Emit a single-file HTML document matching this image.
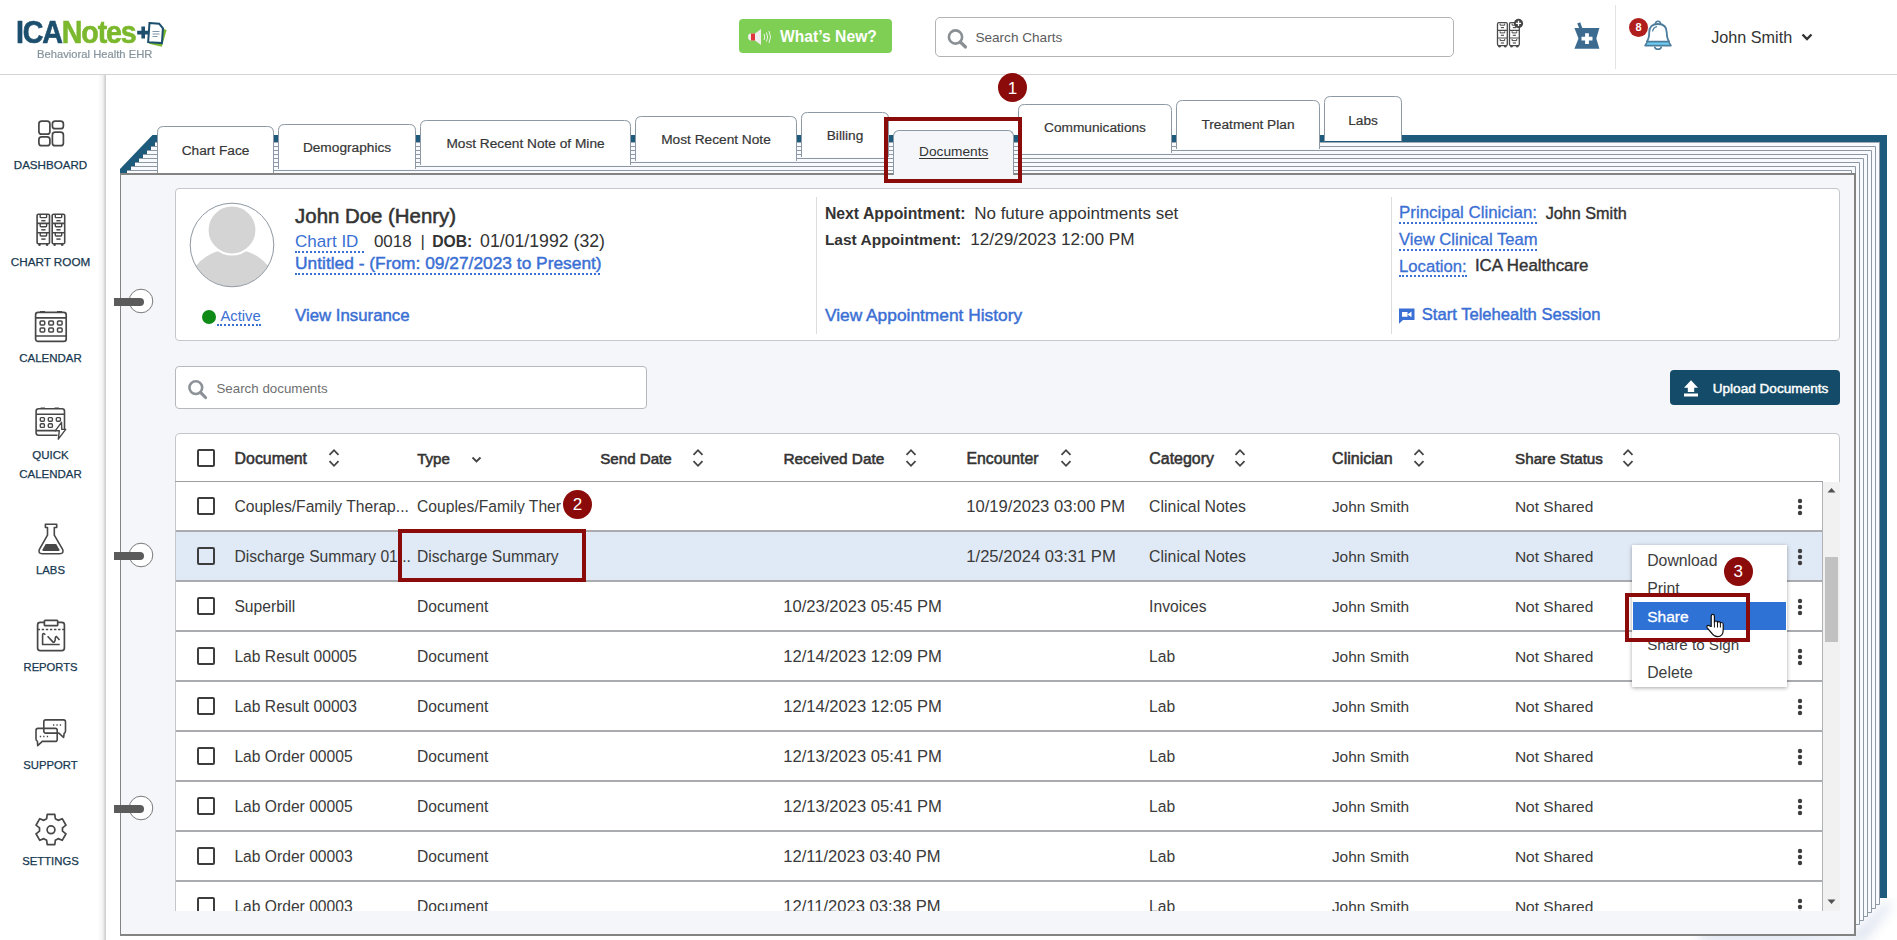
<!DOCTYPE html><html><head><meta charset="utf-8"><style>
*{margin:0;padding:0;box-sizing:border-box}
html,body{width:1897px;height:940px;overflow:hidden;background:#fff;font-family:'Liberation Sans', sans-serif;}
.t{position:absolute;white-space:nowrap;line-height:1}
.a{position:absolute}
.sb{-webkit-text-stroke:0.35px currentColor}
</style></head><body><div class="a" style="left:0;top:0;width:1897px;height:74px;background:#fff;border-bottom:1px solid #d4d4d4;height:75px"></div>
<div class="t" style="left:16px;top:16.84px;font-size:31.5px;font-weight:bold;letter-spacing:-1.3px;transform:scaleX(0.91);transform-origin:0 0;-webkit-text-stroke:0.6px currentColor"><span style="color:#1c4f6d">ICA</span><span style="color:#7bb82d">Notes</span></div>
<svg class="a" style="left:136px;top:20px" width="34" height="30" viewBox="0 0 34 30">
<path d="M19 5.5 L30.6 10 L25.8 26.7 L13 23.8 Z" fill="#7bb82d"/>
<path d="M12.8 3.4 H22.5 L26.6 7.8 V22.6 H12.8 Z" fill="#fff" stroke="#1c4f6d" stroke-width="2" transform="rotate(4 19 13)"/>
<path d="M1.2 12.6h12M7.2 6.6v12" stroke="#1c4f6d" stroke-width="3.6" fill="none"/>
<path d="M16.5 11.5h7M16.5 14h7M16.5 16.5h5" stroke="#7f96a8" stroke-width="1"/>
</svg>
<div class="t" style="left:36.5px;top:48.55px;font-size:11.4px;color:#85939b;transform:scaleX(0.985);transform-origin:0 0;-webkit-text-stroke:0.2px #85939b">Behavioral Health EHR</div>
<div class="a" style="left:739px;top:19px;width:153px;height:34px;background:#7fcf54;border-radius:4px"></div>
<svg class="a" style="left:746px;top:27px" width="26" height="20" viewBox="0 0 26 20">
<path d="M2 9.5 Q2 6.5 5 6.5 H9 L15 2 V18 L9 13.5 H5 Q2 13.5 2 9.5Z" fill="#eeeeee"/>
<rect x="5" y="6.5" width="4" height="7" fill="#e0353a"/>
<path d="M18 7 Q19.5 10 18 13M20.5 5.5 Q22.7 10 20.5 14.5M23 4 Q26 10 23 16" stroke="#eef5ea" stroke-width="1" fill="none"/>
</svg>
<div class="t " style="left:779.90px;top:28.99px;font-size:15.6px;font-weight:bold;color:#fff;letter-spacing:0.05px">What’s New?</div>
<div class="a" style="left:935px;top:17px;width:519px;height:40px;border:1px solid #b3b3b3;border-radius:5px;background:#fff"></div>
<svg class="a" style="left:946px;top:28px" width="24" height="22" viewBox="0 0 24 22">
<circle cx="9.5" cy="9" r="6.6" stroke="#8a8f94" stroke-width="2.6" fill="none"/>
<path d="M14.3 14 L19.5 19" stroke="#8a8f94" stroke-width="3.2" stroke-linecap="round"/>
</svg>
<div class="t " style="left:975.40px;top:30.69px;font-size:13.6px;color:#5c5c5c;">Search Charts</div>
<svg class="a" style="left:1490px;top:0" width="40" height="60" viewBox="0 0 40 60"><rect x="7.5" y="22.6" width="9.8" height="23" rx="1.3" stroke="#4a4a4a" stroke-width="1.3" fill="#fff"/><path d="M7.5 30.3 h9.8 M7.5 38 h9.8" stroke="#4a4a4a" stroke-width="1.2"/><path d="M10.1 23.6 v1.6 h4.6 v-1.6" stroke="#4a4a4a" stroke-width="1" fill="none"/><path d="M10.8 27.6 h3.2" stroke="#4a4a4a" stroke-width="1.1"/><path d="M10.1 31.3 v1.6 h4.6 v-1.6" stroke="#4a4a4a" stroke-width="1" fill="none"/><path d="M10.8 35.3 h3.2" stroke="#4a4a4a" stroke-width="1.1"/><path d="M10.1 39.0 v1.6 h4.6 v-1.6" stroke="#4a4a4a" stroke-width="1" fill="none"/><path d="M10.8 43.0 h3.2" stroke="#4a4a4a" stroke-width="1.1"/><circle cx="9.5" cy="46.3" r="1.3" fill="#4a4a4a"/><circle cx="15.3" cy="46.3" r="1.3" fill="#4a4a4a"/><rect x="19.5" y="22.6" width="9.8" height="23" rx="1.3" stroke="#4a4a4a" stroke-width="1.3" fill="#fff"/><path d="M19.5 30.3 h9.8 M19.5 38 h9.8" stroke="#4a4a4a" stroke-width="1.2"/><path d="M22.1 23.6 v1.6 h4.6 v-1.6" stroke="#4a4a4a" stroke-width="1" fill="none"/><path d="M22.8 27.6 h3.2" stroke="#4a4a4a" stroke-width="1.1"/><path d="M22.1 31.3 v1.6 h4.6 v-1.6" stroke="#4a4a4a" stroke-width="1" fill="none"/><path d="M22.8 35.3 h3.2" stroke="#4a4a4a" stroke-width="1.1"/><path d="M22.1 39.0 v1.6 h4.6 v-1.6" stroke="#4a4a4a" stroke-width="1" fill="none"/><path d="M22.8 43.0 h3.2" stroke="#4a4a4a" stroke-width="1.1"/><circle cx="21.5" cy="46.3" r="1.3" fill="#4a4a4a"/><circle cx="27.3" cy="46.3" r="1.3" fill="#4a4a4a"/><circle cx="28.5" cy="23.4" r="4.6" fill="#444"/><path d="M28.5 20.8v5.2M25.9 23.4h5.2" stroke="#fff" stroke-width="1.3"/></svg>
<svg class="a" style="left:1570px;top:18px" width="34" height="34" viewBox="0 0 34 34">
<path d="M7.2 5.5 L10.2 4.2 L12.5 10.5 L9.3 10.5Z" fill="#3d6b90"/>
<path d="M4.4 10.1 H29.4 L26.3 20.6 L29.4 30.7 H4.4 L8.5 20.6 Z" fill="#3d6b90"/>
<path d="M17 15.2 V26 M11.5 20.6 H22.5" stroke="#fff" stroke-width="3.8"/>
</svg>
<div class="a" style="left:1615px;top:5px;width:1px;height:64px;background:#e3e3e3"></div>
<svg class="a" style="left:1640px;top:18px" width="36" height="34" viewBox="0 0 36 34">
<path d="M6.5 24 Q9.2 21 9.2 14.8 Q9.2 6 18 6 Q26.8 6 26.8 14.8 Q26.8 21 29.5 24" stroke="#4d7c9c" stroke-width="1.8" fill="none"/>
<path d="M5 27.6 L7.5 23.6 H28.5 L31 27.6 Z" fill="#6ccdf2" stroke="#4d7c9c" stroke-width="1.6" stroke-linejoin="round"/>
<path d="M15.5 6 Q15.5 3.2 18 3.2 Q20.5 3.2 20.5 6" stroke="#4d7c9c" stroke-width="1.6" fill="none"/>
<path d="M14.6 28.6 Q15 31.3 18 31.3 Q21 31.3 21.4 28.6" stroke="#4d7c9c" stroke-width="1.6" fill="none"/>
<path d="M12.6 13.5 Q13 9.3 17 8.6" stroke="#4d7c9c" stroke-width="1.2" fill="none"/>
</svg>
<div class="a" style="left:1629px;top:18px;width:19px;height:19px;border-radius:50%;background:#b01e1e"></div>
<div class="t " style="left:1338.50px;width:600px;text-align:center;top:22.49px;font-size:11px;font-weight:bold;color:#fff;">8</div>
<div class="t " style="left:1711.20px;top:29.19px;font-size:16.2px;color:#333;">John Smith</div>
<svg class="a" style="left:1800px;top:31px" width="14" height="12" viewBox="0 0 14 12"><path d="M2.5 3.5 L7 8 L11.5 3.5" stroke="#333" stroke-width="2.4" fill="none"/></svg>
<div class="a" style="left:0;top:75px;width:106px;height:865px;background:linear-gradient(to right,#fff 0,#fff 98px,#f1f1f1 103px,#d2d2d2 105px,#d2d2d2 106px)"></div>
<svg class="a" style="left:34px;top:116px" width="34" height="34" viewBox="0 0 34 34" fill="none" stroke="#474747" stroke-width="1.7">
<rect x="4.9" y="5.1" width="11" height="13.1" rx="2.8"/><rect x="4.9" y="20.8" width="11" height="8.9" rx="2.8"/>
<rect x="18.4" y="5.1" width="11" height="7.6" rx="2.8"/><rect x="18.4" y="16.1" width="11" height="13.6" rx="2.8"/></svg>
<svg class="a" style="left:34px;top:211px" width="34" height="38" viewBox="0 0 34 38" fill="none" stroke="#474747" stroke-width="1.6"><rect x="3.1" y="3.3" width="12.4" height="29.4" rx="1.3"/><path d="M3.1 12.4H15.5M3.1 21.7H15.5"/><path d="M6.2 3.3 V5.9 Q6.2 6.6 7.0 6.6 H11.8 Q12.6 6.6 12.6 5.9 V3.3" stroke-width="1.4"/><path d="M7.3 9.7H11.5" stroke-width="1.5"/><path d="M6.2 12.4 V15.0 Q6.2 15.7 7.0 15.7 H11.8 Q12.6 15.7 12.6 15.0 V12.4" stroke-width="1.4"/><path d="M7.3 18.8H11.5" stroke-width="1.5"/><path d="M6.2 21.7 V24.3 Q6.2 25.0 7.0 25.0 H11.8 Q12.6 25.0 12.6 24.3 V21.7" stroke-width="1.4"/><path d="M7.3 28.1H11.5" stroke-width="1.5"/><circle cx="5.5" cy="33.8" r="1.3" fill="#474747" stroke="none"/><circle cx="13.1" cy="33.8" r="1.3" fill="#474747" stroke="none"/><rect x="18.2" y="3.3" width="12.5" height="29.4" rx="1.3"/><path d="M18.2 12.4H30.7M18.2 21.7H30.7"/><path d="M21.3 3.3 V5.9 Q21.3 6.6 22.1 6.6 H26.9 Q27.7 6.6 27.7 5.9 V3.3" stroke-width="1.4"/><path d="M22.4 9.7H26.6" stroke-width="1.5"/><path d="M21.3 12.4 V15.0 Q21.3 15.7 22.1 15.7 H26.9 Q27.7 15.7 27.7 15.0 V12.4" stroke-width="1.4"/><path d="M22.4 18.8H26.6" stroke-width="1.5"/><path d="M21.3 21.7 V24.3 Q21.3 25.0 22.1 25.0 H26.9 Q27.7 25.0 27.7 24.3 V21.7" stroke-width="1.4"/><path d="M22.4 28.1H26.6" stroke-width="1.5"/><circle cx="20.6" cy="33.8" r="1.3" fill="#474747" stroke="none"/><circle cx="28.2" cy="33.8" r="1.3" fill="#474747" stroke="none"/></svg>
<svg class="a" style="left:33px;top:308px" width="36" height="36" viewBox="0 0 36 36" fill="none" stroke="#474747" stroke-width="1.7">
<rect x="2.6" y="4.3" width="30.6" height="29" rx="2.4"/><path d="M2.6 9.9H33.2M2.6 28H33.2"/><path d="M7 3.8h5M24 3.8h5" stroke-width="1.5"/>
<rect x="7.1" y="12.9" width="4.6" height="4" rx="1" stroke-width="1.5"/><rect x="15.8" y="12.9" width="4.6" height="4" rx="1" stroke-width="1.5"/><rect x="24.5" y="12.9" width="4.6" height="4" rx="1" stroke-width="1.5"/>
<rect x="7.1" y="19.9" width="4.6" height="4" rx="1" stroke-width="1.5"/><rect x="15.8" y="19.9" width="4.6" height="4" rx="1" stroke-width="1.5"/><rect x="24.5" y="19.9" width="4.6" height="4" rx="1" stroke-width="1.5"/></svg>
<svg class="a" style="left:33px;top:405px" width="36" height="38" viewBox="0 0 36 38" fill="none" stroke="#474747" stroke-width="1.6">
<path d="M24.5 30.2 H5.6 Q3.1 30.2 3.1 27.7 V6.3 Q3.1 3.8 5.6 3.8 H29 Q31.5 3.8 31.5 6.3 V24"/><path d="M3.1 9.2H31.5M3.1 25.6H22.8"/><path d="M7.5 3.3h4.5M21.5 3.3h4.5" stroke-width="1.4"/>
<rect x="7.3" y="12.6" width="4.1" height="3.7" rx="1" stroke-width="1.4"/><rect x="15.3" y="12.6" width="4.1" height="3.7" rx="1" stroke-width="1.4"/><rect x="23.3" y="12.6" width="4.1" height="3.7" rx="1" stroke-width="1.4"/>
<rect x="7.3" y="18.7" width="4.1" height="3.7" rx="1" stroke-width="1.4"/><rect x="15.3" y="18.7" width="4.1" height="3.7" rx="1" stroke-width="1.4"/>
<path d="M28.5 17.3 L22.2 25.8 H26.3 L25.3 34.2 L32.7 24.4 H28.8 Z" fill="#fff" stroke-width="1.4" stroke-linejoin="round"/></svg>
<svg class="a" style="left:34px;top:521px" width="34" height="36" viewBox="0 0 34 36" fill="none" stroke="#474747" stroke-width="1.6">
<path d="M11.4 3.2 H22.7 V6.5 H20.3 V14.2 L28.6 28.3 Q30.3 32.7 25.7 32.7 H8.3 Q3.7 32.7 5.4 28.3 L13.5 14.2 V6.5 H11.4 Z" stroke-linejoin="round"/>
<path d="M11.7 23.1 H22.2 L25.4 28.4 Q26.1 29.9 24.4 29.9 H9.6 Q7.9 29.9 8.5 28.4 Z" fill="#474747" stroke="none"/></svg>
<svg class="a" style="left:34px;top:617px" width="34" height="37" viewBox="0 0 34 37" fill="none" stroke="#474747" stroke-width="1.7">
<rect x="3.6" y="5.4" width="26.8" height="28.3" rx="2.6"/><rect x="10.4" y="3.3" width="13.3" height="5.4" rx="0.8" fill="#fff"/>
<path d="M3.6 12.4 H30.4" stroke-dasharray="2.4 1.7" stroke-width="1.5"/>
<path d="M11.3 17.8 Q10.3 16.4 9.4 16.6 Q8.6 16.8 8.6 18 V27.5 H25.7" stroke-width="1.6"/><path d="M13.6 19.3 L18.8 24.9 Q19.5 25.7 20.3 25 Q21.3 24 21.4 20.7 Q21.6 19.3 22.6 19.6 L25.5 23" stroke-width="1.6"/></svg>
<svg class="a" style="left:33px;top:716px" width="36" height="34" viewBox="0 0 36 34" fill="none" stroke="#474747" stroke-width="1.6" stroke-linejoin="round">
<path d="M12.8 3.9 H30.5 Q32.5 3.9 32.5 5.9 V15.1 Q32.5 16.9 31.2 17.2 L30.6 21.5 L25.9 17.1 H12.8 Q10.8 17.1 10.8 15.1 V5.9 Q10.8 3.9 12.8 3.9Z"/>
<path d="M5 12.4 H22.2 Q24.2 12.4 24.2 14.4 V23.4 Q24.2 25.4 22.2 25.4 H9.3 L4.7 29.6 L4.4 25.2 Q3 24.7 3 23 V14.4 Q3 12.4 5 12.4Z"/>
<path d="M20 9h1.3M23.4 9h1.3M26.8 9h1.3M6.8 20.5h1.3M10.2 20.5h1.3M13.8 20.5h1.3" stroke-width="1.4"/></svg>
<svg class="a" style="left:33.7px;top:813.2px" width="34" height="34" viewBox="0 0 34 34" fill="none" stroke="#474747" stroke-width="1.7">
<path d="M12.65 5.74 L13.23 1.36 L20.77 1.36 L21.35 5.74 L24.14 7.36 L28.22 5.66 L32.00 12.20 L28.49 14.89 L28.49 18.11 L32.00 20.80 L28.22 27.34 L24.14 25.64 L21.35 27.26 L20.77 31.64 L13.23 31.64 L12.65 27.26 L9.86 25.64 L5.78 27.34 L2.00 20.80 L5.51 18.11 L5.51 14.89 L2.00 12.20 L5.78 5.66 L9.86 7.36Z" stroke-linejoin="round"/><circle cx="17" cy="16.8" r="3.9"/></svg>
<div class="t " style="left:-249.50px;width:600px;text-align:center;top:159.28px;font-size:11.6px;color:#173850;-webkit-text-stroke:0.25px #173850">DASHBOARD</div>
<div class="t " style="left:-249.50px;width:600px;text-align:center;top:256.10px;font-size:11.7px;color:#173850;-webkit-text-stroke:0.25px #173850">CHART ROOM</div>
<div class="t " style="left:-249.50px;width:600px;text-align:center;top:353.47px;font-size:11.5px;color:#173850;-webkit-text-stroke:0.25px #173850">CALENDAR</div>
<div class="t " style="left:-249.50px;width:600px;text-align:center;top:450.27px;font-size:11.5px;color:#173850;-webkit-text-stroke:0.25px #173850">QUICK</div>
<div class="t " style="left:-249.50px;width:600px;text-align:center;top:468.57px;font-size:11.5px;color:#173850;-webkit-text-stroke:0.25px #173850">CALENDAR</div>
<div class="t " style="left:-249.50px;width:600px;text-align:center;top:565.33px;font-size:11.3px;color:#173850;-webkit-text-stroke:0.25px #173850">LABS</div>
<div class="t " style="left:-249.50px;width:600px;text-align:center;top:662.42px;font-size:11.2px;color:#173850;-webkit-text-stroke:0.25px #173850">REPORTS</div>
<div class="t " style="left:-249.50px;width:600px;text-align:center;top:759.53px;font-size:11.3px;color:#173850;-webkit-text-stroke:0.25px #173850">SUPPORT</div>
<div class="t " style="left:-249.50px;width:600px;text-align:center;top:856.43px;font-size:11.3px;color:#173850;-webkit-text-stroke:0.25px #173850">SETTINGS</div>
<svg class="a" style="left:0;top:0;z-index:1" width="1897" height="940" viewBox="0 0 1897 940"><defs><filter id="sh" x="-5%" y="-5%" width="110%" height="115%"><feGaussianBlur stdDeviation="6"/></filter></defs><path d="M1700 912 L1850 936 L1888 900 L1892 905 L1865 942 L1700 942Z" fill="#3f63a8" opacity="0.16" filter="url(#sh)"/><polygon points="120,169 152.5,135 1887,135 1887,898 120,898" fill="#1e5a7b"/><rect x="155" y="142" width="1724.5" height="762.5" fill="#f8fafd"/><path d="M155 142.5 H1879.5" stroke="#8c98a3" stroke-width="1" opacity="0.8"/><path d="M1879.5 142.5 V904.5 H155" stroke="#8c98a3" stroke-width="1" fill="none"/><path d="M1324.5 141.5 V102.5 Q1324.5 96.5 1330.5 96.5 H1395.5 Q1401.5 96.5 1401.5 102.5 V141.5" fill="#fff" stroke="#8c98a3" stroke-width="1"/><path d="M1324.5 141.5 H1401.5" stroke="#1e5a7b" stroke-width="1"/><rect x="151" y="146.5" width="1724.5" height="762.0" fill="#f8fafd"/><path d="M151 146.5 H1875.5" stroke="#8c98a3" stroke-width="1" fill="none"/><path d="M1875.5 146.5 V908.5 H151" stroke="#8c98a3" stroke-width="1" fill="none"/><path d="M1176.5 149.0 V106.5 Q1176.5 100.5 1182.5 100.5 H1313.5 Q1319.5 100.5 1319.5 106.5 V149.0" fill="#fff" stroke="#8c98a3" stroke-width="1"/><rect x="1177.0" y="146.0" width="142.0" height="3" fill="#fff"/><rect x="147" y="150.5" width="1724.5" height="762.0" fill="#f8fafd"/><path d="M147 150.5 H1871.5" stroke="#8c98a3" stroke-width="1" fill="none"/><path d="M1871.5 150.5 V912.5 H147" stroke="#8c98a3" stroke-width="1" fill="none"/><path d="M1018.5 153.0 V110.5 Q1018.5 104.5 1024.5 104.5 H1165.5 Q1171.5 104.5 1171.5 110.5 V153.0" fill="#fff" stroke="#8c98a3" stroke-width="1"/><rect x="1019.0" y="150.0" width="152.0" height="3" fill="#fff"/><rect x="143" y="154.5" width="1724.5" height="762.0" fill="#f8fafd"/><path d="M143 154.5 H1867.5" stroke="#8c98a3" stroke-width="1" fill="none"/><path d="M1867.5 154.5 V916.5 H143" stroke="#8c98a3" stroke-width="1" fill="none"/><path d="M801.5 157.0 V118.5 Q801.5 112.5 807.5 112.5 H882.5 Q888.5 112.5 888.5 118.5 V157.0" fill="#fff" stroke="#8c98a3" stroke-width="1"/><rect x="802.0" y="154.0" width="86.0" height="3" fill="#fff"/><rect x="139" y="158.5" width="1724.5" height="762.0" fill="#f8fafd"/><path d="M139 158.5 H1863.5" stroke="#8c98a3" stroke-width="1" fill="none"/><path d="M1863.5 158.5 V920.5 H139" stroke="#8c98a3" stroke-width="1" fill="none"/><path d="M635.5 161.0 V122.5 Q635.5 116.5 641.5 116.5 H790.5 Q796.5 116.5 796.5 122.5 V161.0" fill="#fff" stroke="#8c98a3" stroke-width="1"/><rect x="636.0" y="158.0" width="160.0" height="3" fill="#fff"/><rect x="135" y="162.5" width="1724.5" height="762.0" fill="#f8fafd"/><path d="M135 162.5 H1859.5" stroke="#8c98a3" stroke-width="1" fill="none"/><path d="M1859.5 162.5 V924.5 H135" stroke="#8c98a3" stroke-width="1" fill="none"/><path d="M420.5 165.0 V126.5 Q420.5 120.5 426.5 120.5 H624.5 Q630.5 120.5 630.5 126.5 V165.0" fill="#fff" stroke="#8c98a3" stroke-width="1"/><rect x="421.0" y="162.0" width="209.0" height="3" fill="#fff"/><rect x="131" y="166.5" width="1724.5" height="762.0" fill="#f8fafd"/><path d="M131 166.5 H1855.5" stroke="#8c98a3" stroke-width="1" fill="none"/><path d="M1855.5 166.5 V928.5 H131" stroke="#8c98a3" stroke-width="1" fill="none"/><path d="M278.5 169.0 V130.5 Q278.5 124.5 284.5 124.5 H409.5 Q415.5 124.5 415.5 130.5 V169.0" fill="#fff" stroke="#8c98a3" stroke-width="1"/><rect x="279.0" y="166.0" width="136.0" height="3" fill="#fff"/><rect x="127" y="170.5" width="1724.5" height="762.0" fill="#f8fafd"/><path d="M127 170.5 H1851.5" stroke="#8c98a3" stroke-width="1" fill="none"/><path d="M1851.5 170.5 V932.5 H127" stroke="#8c98a3" stroke-width="1" fill="none"/><path d="M157.5 173.0 V132.5 Q157.5 126.5 163.5 126.5 H267.5 Q273.5 126.5 273.5 132.5 V173.0" fill="#fff" stroke="#8c98a3" stroke-width="1"/><rect x="158.0" y="170.0" width="115.0" height="3" fill="#fff"/></svg>
<div class="t " style="left:-84.50px;width:600px;text-align:center;top:143.80px;font-size:13.7px;color:#363636;z-index:2;-webkit-text-stroke:0.2px #363636">Chart Face</div>
<div class="t " style="left:47.00px;width:600px;text-align:center;top:141.40px;font-size:13.7px;color:#363636;z-index:2;-webkit-text-stroke:0.2px #363636">Demographics</div>
<div class="t " style="left:225.50px;width:600px;text-align:center;top:137.40px;font-size:13.7px;color:#363636;z-index:2;-webkit-text-stroke:0.2px #363636">Most Recent Note of Mine</div>
<div class="t " style="left:416.00px;width:600px;text-align:center;top:133.40px;font-size:13.7px;color:#363636;z-index:2;-webkit-text-stroke:0.2px #363636">Most Recent Note</div>
<div class="t " style="left:545.00px;width:600px;text-align:center;top:129.10px;font-size:13.7px;color:#363636;z-index:2;-webkit-text-stroke:0.2px #363636">Billing</div>
<div class="t " style="left:795.00px;width:600px;text-align:center;top:121.40px;font-size:13.7px;color:#363636;z-index:2;-webkit-text-stroke:0.2px #363636">Communications</div>
<div class="t " style="left:948.00px;width:600px;text-align:center;top:117.70px;font-size:13.7px;color:#363636;z-index:2;-webkit-text-stroke:0.2px #363636">Treatment Plan</div>
<div class="t " style="left:1063.00px;width:600px;text-align:center;top:113.80px;font-size:13.7px;color:#363636;z-index:2;-webkit-text-stroke:0.2px #363636">Labs</div>
<div class="a" style="left:120px;top:173px;width:1736px;height:763px;background:#f5f6fa;border:2px solid #838383;border-left-width:1.5px;z-index:3"></div>
<div class="a" style="left:893px;top:130px;width:121px;height:45px;background:#f5f6fa;border:1px solid #8c98a3;border-bottom:none;border-radius:6px 6px 0 0;z-index:4"></div>
<div class="t " style="left:653.70px;width:600px;text-align:center;top:145.00px;font-size:13.7px;color:#333;z-index:5;text-decoration:underline;text-underline-offset:2px">Documents</div>
<svg class="a" style="left:110px;top:286px;z-index:6" width="50" height="30" viewBox="0 0 50 30"><circle cx="31" cy="15" r="11.8" fill="#fff" stroke="#7a7a7a" stroke-width="1"/><path d="M4 12 H30 Q34 12 34 16 Q34 20 30 20 H4Z" fill="#5b5b5b"/></svg>
<svg class="a" style="left:110px;top:540px;z-index:6" width="50" height="30" viewBox="0 0 50 30"><circle cx="31" cy="15" r="11.8" fill="#fff" stroke="#7a7a7a" stroke-width="1"/><path d="M4 12 H30 Q34 12 34 16 Q34 20 30 20 H4Z" fill="#5b5b5b"/></svg>
<svg class="a" style="left:110px;top:793px;z-index:6" width="50" height="30" viewBox="0 0 50 30"><circle cx="31" cy="15" r="11.8" fill="#fff" stroke="#7a7a7a" stroke-width="1"/><path d="M4 12 H30 Q34 12 34 16 Q34 20 30 20 H4Z" fill="#5b5b5b"/></svg>
<div class="a" style="left:175px;top:188px;width:1665px;height:153px;background:#fff;border:1px solid #c4c7cc;border-radius:4px;z-index:5"></div>
<svg class="a" style="left:188px;top:201px;z-index:6" width="88" height="88" viewBox="0 0 88 88">
<defs><clipPath id="av"><circle cx="44" cy="44" r="41.5"/></clipPath></defs>
<circle cx="44" cy="44" r="41.5" fill="#fff"/>
<g clip-path="url(#av)"><ellipse cx="44" cy="90" rx="45" ry="42" fill="#d4d4d4"/><circle cx="44" cy="29" r="24.5" fill="#d4d4d4" stroke="#fff" stroke-width="2.2"/></g>
<circle cx="44" cy="44" r="41.8" fill="none" stroke="#8e98a2" stroke-width="1"/>
</svg>
<div class="t " style="left:295.10px;top:206.43px;font-size:20.4px;color:#333;z-index:6;-webkit-text-stroke:0.55px #333">John Doe (Henry)</div>
<div class="t " style="left:295.10px;top:233.01px;font-size:17px;color:#3a6fd4;z-index:6;">Chart ID</div>
<div class="a" style="left:295px;top:250.5px;width:69px;height:0;border-top:2px dotted #3a6fd4;z-index:6"></div>
<div class="t " style="left:373.90px;top:233.01px;font-size:17px;color:#333;z-index:6;">0018</div>
<div class="t " style="left:420.60px;top:233.01px;font-size:17px;color:#333;z-index:6;">|</div>
<div class="t " style="left:432.20px;top:234.11px;font-size:15.7px;font-weight:bold;color:#333;z-index:6;">DOB:</div>
<div class="t " style="left:480.10px;top:233.02px;font-size:17.7px;color:#333;z-index:6;">01/01/1992 (32)</div>
<div class="t " style="left:295.10px;top:255.31px;font-size:17.35px;color:#3a6fd4;z-index:6;-webkit-text-stroke:0.45px #3a6fd4">Untitled - (From: 09/27/2023 to Present)</div>
<div class="a" style="left:295px;top:272.5px;width:305px;height:0;border-top:2px dotted #3a6fd4;z-index:6"></div>
<div class="a" style="left:202px;top:310px;width:14px;height:14px;border-radius:50%;background:#0e8a16;z-index:6"></div>
<div class="t " style="left:220.40px;top:309.47px;font-size:14.8px;color:#3a6fd4;z-index:6;">Active</div>
<div class="a" style="left:217px;top:324px;width:44px;height:0;border-top:2px dotted #3a6fd4;z-index:6"></div>
<div class="t " style="left:295.10px;top:307.78px;font-size:16.8px;color:#3a6fd4;z-index:6;-webkit-text-stroke:0.45px #3a6fd4">View Insurance</div>
<div class="a" style="left:816px;top:197px;width:1px;height:137px;background:#dcdcdc;z-index:6"></div>
<div class="t " style="left:824.90px;top:205.83px;font-size:15.8px;font-weight:bold;color:#333;z-index:6;">Next Appointment:</div>
<div class="t " style="left:974.20px;top:204.81px;font-size:17px;color:#333;z-index:6;">No future appointments set</div>
<div class="t " style="left:824.90px;top:232.48px;font-size:15.5px;font-weight:bold;color:#333;z-index:6;">Last Appointment:</div>
<div class="t " style="left:970.20px;top:231.04px;font-size:17.2px;color:#333;z-index:6;">12/29/2023 12:00 PM</div>
<div class="t " style="left:824.90px;top:306.51px;font-size:17.35px;color:#3a6fd4;z-index:6;-webkit-text-stroke:0.45px #3a6fd4">View Appointment History</div>
<div class="a" style="left:1391px;top:197px;width:1px;height:137px;background:#dcdcdc;z-index:6"></div>
<div class="t " style="left:1399.00px;top:205.39px;font-size:16.9px;color:#3a6fd4;z-index:6;-webkit-text-stroke:0.3px #3a6fd4">Principal Clinician:</div>
<div class="a" style="left:1399px;top:222px;width:138px;height:0;border-top:2px dotted #3a6fd4;z-index:6"></div>
<div class="t " style="left:1545.70px;top:205.49px;font-size:16.2px;color:#333;z-index:6;-webkit-text-stroke:0.4px #333">John Smith</div>
<div class="t " style="left:1399.00px;top:231.65px;font-size:16.6px;color:#3a6fd4;z-index:6;-webkit-text-stroke:0.3px #3a6fd4">View Clinical Team</div>
<div class="a" style="left:1399px;top:248.5px;width:138px;height:0;border-top:2px dotted #3a6fd4;z-index:6"></div>
<div class="t " style="left:1399.00px;top:258.66px;font-size:16.7px;color:#3a6fd4;z-index:6;-webkit-text-stroke:0.3px #3a6fd4">Location:</div>
<div class="a" style="left:1399px;top:275px;width:68px;height:0;border-top:2px dotted #3a6fd4;z-index:6"></div>
<div class="t " style="left:1474.90px;top:257.99px;font-size:16.9px;color:#333;z-index:6;-webkit-text-stroke:0.4px #333">ICA Healthcare</div>
<svg class="a" style="left:1398px;top:307px;z-index:6" width="18" height="18" viewBox="0 0 18 18">
<path d="M1 1.5 H16.5 V13 H5 L1 16.8Z" fill="#3a6fd4"/><path d="M4 5 H9.5 V9.8 H4Z M9.5 7.4 L13.5 4.6 V10.2Z" fill="#fff"/></svg>
<div class="t " style="left:1421.80px;top:306.85px;font-size:16.6px;color:#3a6fd4;z-index:6;-webkit-text-stroke:0.45px #3a6fd4">Start Telehealth Session</div>
<div class="a" style="left:175px;top:366px;width:472px;height:43px;background:#fff;border:1px solid #b5b8bd;border-radius:4px;z-index:5"></div>
<svg class="a" style="left:186px;top:378px;z-index:6" width="24" height="24" viewBox="0 0 24 24">
<circle cx="9.8" cy="9.6" r="6.4" stroke="#8c9298" stroke-width="2.6" fill="none"/>
<path d="M14.5 14.4 L19.5 19.5" stroke="#8c9298" stroke-width="3.2" stroke-linecap="round"/></svg>
<div class="t " style="left:216.40px;top:382.30px;font-size:13.35px;color:#6f6f6f;z-index:6;">Search documents</div>
<div class="a" style="left:1670px;top:370px;width:170px;height:35px;background:#134b68;border-radius:4px;z-index:5"></div>
<svg class="a" style="left:1680px;top:377px;z-index:6" width="22" height="22" viewBox="0 0 22 22">
<path d="M11 3.3 L18 10.8 H14.2 V15 H7.8 V10.8 H4Z" fill="#fff"/><rect x="4" y="16.5" width="14" height="3" fill="#fff"/></svg>
<div class="t " style="left:1712.70px;top:381.89px;font-size:13.6px;color:#fff;z-index:6;-webkit-text-stroke:0.45px #fff">Upload Documents</div>
<div class="a" style="left:175px;top:433px;width:1665px;height:478px;background:#fff;border:1px solid #c3c6ca;border-bottom:none;border-radius:5px 5px 0 0;z-index:5"></div>
<div class="a" style="left:175px;top:481px;width:1648px;height:1px;background:#9c9ea1;z-index:6"></div>
<div class="a" style="left:1823px;top:482px;width:17px;height:429px;background:#f1f1f1;z-index:6"></div>
<div class="a" style="left:1825px;top:557px;width:13px;height:85px;background:#c1c1c1;z-index:7"></div>
<svg class="a" style="left:1825px;top:485px;z-index:7" width="13" height="10" viewBox="0 0 13 10"><path d="M2.5 7.5 L6.5 3 L10.5 7.5Z" fill="#505050"/></svg>
<svg class="a" style="left:1825px;top:897px;z-index:7" width="13" height="10" viewBox="0 0 13 10"><path d="M2.5 2.5 L6.5 7 L10.5 2.5Z" fill="#505050"/></svg>
<div class="a" style="left:1822px;top:482px;width:1px;height:429px;background:#b0b2b5;z-index:7"></div>
<div class="a" style="left:197px;top:449px;width:18px;height:18px;border:2px solid #3d3d3d;border-radius:2px;z-index:8"></div>
<div class="t " style="left:234.60px;top:450.74px;font-size:15.9px;color:#333;z-index:8;-webkit-text-stroke:0.55px #333">Document</div>
<svg class="a" style="left:328px;top:448px;z-index:8" width="12" height="20" viewBox="0 0 12 20"><path d="M1.5 6.8 L6 2.2 L10.5 6.8 M1.5 13.2 L6 17.8 L10.5 13.2" stroke="#444" stroke-width="1.8" fill="none"/></svg>
<div class="t " style="left:417.20px;top:451.42px;font-size:15.1px;color:#333;z-index:8;-webkit-text-stroke:0.55px #333">Type</div>
<div class="t " style="left:600.20px;top:451.38px;font-size:15.15px;color:#333;z-index:8;-webkit-text-stroke:0.55px #333">Send Date</div>
<svg class="a" style="left:692.3px;top:448px;z-index:8" width="12" height="20" viewBox="0 0 12 20"><path d="M1.5 6.8 L6 2.2 L10.5 6.8 M1.5 13.2 L6 17.8 L10.5 13.2" stroke="#444" stroke-width="1.8" fill="none"/></svg>
<div class="t " style="left:783.40px;top:451.16px;font-size:15.4px;color:#333;z-index:8;-webkit-text-stroke:0.55px #333">Received Date</div>
<svg class="a" style="left:904.6px;top:448px;z-index:8" width="12" height="20" viewBox="0 0 12 20"><path d="M1.5 6.8 L6 2.2 L10.5 6.8 M1.5 13.2 L6 17.8 L10.5 13.2" stroke="#444" stroke-width="1.8" fill="none"/></svg>
<div class="t " style="left:966.50px;top:450.83px;font-size:15.8px;color:#333;z-index:8;-webkit-text-stroke:0.55px #333">Encounter</div>
<svg class="a" style="left:1059.5px;top:448px;z-index:8" width="12" height="20" viewBox="0 0 12 20"><path d="M1.5 6.8 L6 2.2 L10.5 6.8 M1.5 13.2 L6 17.8 L10.5 13.2" stroke="#444" stroke-width="1.8" fill="none"/></svg>
<div class="t " style="left:1149.30px;top:450.70px;font-size:15.95px;color:#333;z-index:8;-webkit-text-stroke:0.55px #333">Category</div>
<svg class="a" style="left:1233.5px;top:448px;z-index:8" width="12" height="20" viewBox="0 0 12 20"><path d="M1.5 6.8 L6 2.2 L10.5 6.8 M1.5 13.2 L6 17.8 L10.5 13.2" stroke="#444" stroke-width="1.8" fill="none"/></svg>
<div class="t " style="left:1332.10px;top:450.66px;font-size:16px;color:#333;z-index:8;-webkit-text-stroke:0.55px #333">Clinician</div>
<svg class="a" style="left:1412.7px;top:448px;z-index:8" width="12" height="20" viewBox="0 0 12 20"><path d="M1.5 6.8 L6 2.2 L10.5 6.8 M1.5 13.2 L6 17.8 L10.5 13.2" stroke="#444" stroke-width="1.8" fill="none"/></svg>
<div class="t " style="left:1515.10px;top:451.33px;font-size:15.2px;color:#333;z-index:8;-webkit-text-stroke:0.55px #333">Share Status</div>
<svg class="a" style="left:1622.2px;top:448px;z-index:8" width="12" height="20" viewBox="0 0 12 20"><path d="M1.5 6.8 L6 2.2 L10.5 6.8 M1.5 13.2 L6 17.8 L10.5 13.2" stroke="#444" stroke-width="1.8" fill="none"/></svg>
<svg class="a" style="left:470px;top:454px;z-index:8" width="13" height="12" viewBox="0 0 13 12"><path d="M2.5 3.5 L6.5 7.5 L10.5 3.5" stroke="#444" stroke-width="1.8" fill="none"/></svg>
<div class="a" style="left:176px;top:482px;width:1646px;height:429px;overflow:hidden;z-index:6">
<div class="a" style="left:0;top:0px;width:1646px;height:48px;background:#fff"></div>
<div class="a" style="left:0;top:48px;width:1646px;height:2px;background:#a9abae"></div>
<div class="a" style="left:21px;top:15px;width:18px;height:18px;border:2px solid #3d3d3d;border-radius:2px"></div>
<div class="t " style="left:58.40px;top:16.75px;font-size:15.65px;color:#3a3a3a;">Couples/Family Therap...</div>
<div class="t " style="left:241.00px;top:16.75px;font-size:15.65px;color:#3a3a3a;width:144px;overflow:hidden;">Couples/Family Therapy</div>
<div class="t " style="left:790.30px;top:16.65px;font-size:16.6px;color:#3a3a3a;">10/19/2023 03:00 PM</div>
<div class="t " style="left:973.10px;top:16.58px;font-size:15.85px;color:#3a3a3a;">Clinical Notes</div>
<div class="t " style="left:1155.90px;top:16.92px;font-size:15.45px;color:#3a3a3a;">John Smith</div>
<div class="t " style="left:1338.90px;top:16.88px;font-size:15.5px;color:#3a3a3a;">Not Shared</div>
<svg class="a" style="left:1620px;top:15px" width="8" height="20" viewBox="0 0 8 20"><circle cx="4" cy="4" r="2.2" fill="#3d3d3d"/><circle cx="4" cy="10" r="2.2" fill="#3d3d3d"/><circle cx="4" cy="16" r="2.2" fill="#3d3d3d"/></svg>
<div class="a" style="left:0;top:50px;width:1646px;height:48px;background:#e0eaf6"></div>
<div class="a" style="left:0;top:98px;width:1646px;height:2px;background:#a9abae"></div>
<div class="a" style="left:21px;top:65px;width:18px;height:18px;border:2px solid #3d3d3d;border-radius:2px"></div>
<div class="t " style="left:58.40px;top:66.75px;font-size:15.65px;color:#3a3a3a;">Discharge Summary 01...</div>
<div class="t " style="left:241.00px;top:66.75px;font-size:15.65px;color:#3a3a3a;">Discharge Summary</div>
<div class="t " style="left:790.30px;top:66.65px;font-size:16.6px;color:#3a3a3a;">1/25/2024 03:31 PM</div>
<div class="t " style="left:973.10px;top:66.58px;font-size:15.85px;color:#3a3a3a;">Clinical Notes</div>
<div class="t " style="left:1155.90px;top:66.92px;font-size:15.45px;color:#3a3a3a;">John Smith</div>
<div class="t " style="left:1338.90px;top:66.88px;font-size:15.5px;color:#3a3a3a;">Not Shared</div>
<svg class="a" style="left:1620px;top:65px" width="8" height="20" viewBox="0 0 8 20"><circle cx="4" cy="4" r="2.2" fill="#3d3d3d"/><circle cx="4" cy="10" r="2.2" fill="#3d3d3d"/><circle cx="4" cy="16" r="2.2" fill="#3d3d3d"/></svg>
<div class="a" style="left:0;top:100px;width:1646px;height:48px;background:#fff"></div>
<div class="a" style="left:0;top:148px;width:1646px;height:2px;background:#a9abae"></div>
<div class="a" style="left:21px;top:115px;width:18px;height:18px;border:2px solid #3d3d3d;border-radius:2px"></div>
<div class="t " style="left:58.40px;top:116.75px;font-size:15.65px;color:#3a3a3a;">Superbill</div>
<div class="t " style="left:241.00px;top:116.75px;font-size:15.65px;color:#3a3a3a;">Document</div>
<div class="t " style="left:607.20px;top:116.65px;font-size:16.6px;color:#3a3a3a;">10/23/2023 05:45 PM</div>
<div class="t " style="left:973.10px;top:116.75px;font-size:15.65px;color:#3a3a3a;">Invoices</div>
<div class="t " style="left:1155.90px;top:116.92px;font-size:15.45px;color:#3a3a3a;">John Smith</div>
<div class="t " style="left:1338.90px;top:116.88px;font-size:15.5px;color:#3a3a3a;">Not Shared</div>
<svg class="a" style="left:1620px;top:115px" width="8" height="20" viewBox="0 0 8 20"><circle cx="4" cy="4" r="2.2" fill="#3d3d3d"/><circle cx="4" cy="10" r="2.2" fill="#3d3d3d"/><circle cx="4" cy="16" r="2.2" fill="#3d3d3d"/></svg>
<div class="a" style="left:0;top:150px;width:1646px;height:48px;background:#fff"></div>
<div class="a" style="left:0;top:198px;width:1646px;height:2px;background:#a9abae"></div>
<div class="a" style="left:21px;top:165px;width:18px;height:18px;border:2px solid #3d3d3d;border-radius:2px"></div>
<div class="t " style="left:58.40px;top:166.75px;font-size:15.65px;color:#3a3a3a;">Lab Result 00005</div>
<div class="t " style="left:241.00px;top:166.75px;font-size:15.65px;color:#3a3a3a;">Document</div>
<div class="t " style="left:607.20px;top:166.65px;font-size:16.6px;color:#3a3a3a;">12/14/2023 12:09 PM</div>
<div class="t " style="left:973.10px;top:166.75px;font-size:15.65px;color:#3a3a3a;">Lab</div>
<div class="t " style="left:1155.90px;top:166.92px;font-size:15.45px;color:#3a3a3a;">John Smith</div>
<div class="t " style="left:1338.90px;top:166.88px;font-size:15.5px;color:#3a3a3a;">Not Shared</div>
<svg class="a" style="left:1620px;top:165px" width="8" height="20" viewBox="0 0 8 20"><circle cx="4" cy="4" r="2.2" fill="#3d3d3d"/><circle cx="4" cy="10" r="2.2" fill="#3d3d3d"/><circle cx="4" cy="16" r="2.2" fill="#3d3d3d"/></svg>
<div class="a" style="left:0;top:200px;width:1646px;height:48px;background:#fff"></div>
<div class="a" style="left:0;top:248px;width:1646px;height:2px;background:#a9abae"></div>
<div class="a" style="left:21px;top:215px;width:18px;height:18px;border:2px solid #3d3d3d;border-radius:2px"></div>
<div class="t " style="left:58.40px;top:216.75px;font-size:15.65px;color:#3a3a3a;">Lab Result 00003</div>
<div class="t " style="left:241.00px;top:216.75px;font-size:15.65px;color:#3a3a3a;">Document</div>
<div class="t " style="left:607.20px;top:216.65px;font-size:16.6px;color:#3a3a3a;">12/14/2023 12:05 PM</div>
<div class="t " style="left:973.10px;top:216.75px;font-size:15.65px;color:#3a3a3a;">Lab</div>
<div class="t " style="left:1155.90px;top:216.92px;font-size:15.45px;color:#3a3a3a;">John Smith</div>
<div class="t " style="left:1338.90px;top:216.88px;font-size:15.5px;color:#3a3a3a;">Not Shared</div>
<svg class="a" style="left:1620px;top:215px" width="8" height="20" viewBox="0 0 8 20"><circle cx="4" cy="4" r="2.2" fill="#3d3d3d"/><circle cx="4" cy="10" r="2.2" fill="#3d3d3d"/><circle cx="4" cy="16" r="2.2" fill="#3d3d3d"/></svg>
<div class="a" style="left:0;top:250px;width:1646px;height:48px;background:#fff"></div>
<div class="a" style="left:0;top:298px;width:1646px;height:2px;background:#a9abae"></div>
<div class="a" style="left:21px;top:265px;width:18px;height:18px;border:2px solid #3d3d3d;border-radius:2px"></div>
<div class="t " style="left:58.40px;top:266.75px;font-size:15.65px;color:#3a3a3a;">Lab Order 00005</div>
<div class="t " style="left:241.00px;top:266.75px;font-size:15.65px;color:#3a3a3a;">Document</div>
<div class="t " style="left:607.20px;top:266.65px;font-size:16.6px;color:#3a3a3a;">12/13/2023 05:41 PM</div>
<div class="t " style="left:973.10px;top:266.75px;font-size:15.65px;color:#3a3a3a;">Lab</div>
<div class="t " style="left:1155.90px;top:266.92px;font-size:15.45px;color:#3a3a3a;">John Smith</div>
<div class="t " style="left:1338.90px;top:266.88px;font-size:15.5px;color:#3a3a3a;">Not Shared</div>
<svg class="a" style="left:1620px;top:265px" width="8" height="20" viewBox="0 0 8 20"><circle cx="4" cy="4" r="2.2" fill="#3d3d3d"/><circle cx="4" cy="10" r="2.2" fill="#3d3d3d"/><circle cx="4" cy="16" r="2.2" fill="#3d3d3d"/></svg>
<div class="a" style="left:0;top:300px;width:1646px;height:48px;background:#fff"></div>
<div class="a" style="left:0;top:348px;width:1646px;height:2px;background:#a9abae"></div>
<div class="a" style="left:21px;top:315px;width:18px;height:18px;border:2px solid #3d3d3d;border-radius:2px"></div>
<div class="t " style="left:58.40px;top:316.75px;font-size:15.65px;color:#3a3a3a;">Lab Order 00005</div>
<div class="t " style="left:241.00px;top:316.75px;font-size:15.65px;color:#3a3a3a;">Document</div>
<div class="t " style="left:607.20px;top:316.65px;font-size:16.6px;color:#3a3a3a;">12/13/2023 05:41 PM</div>
<div class="t " style="left:973.10px;top:316.75px;font-size:15.65px;color:#3a3a3a;">Lab</div>
<div class="t " style="left:1155.90px;top:316.92px;font-size:15.45px;color:#3a3a3a;">John Smith</div>
<div class="t " style="left:1338.90px;top:316.88px;font-size:15.5px;color:#3a3a3a;">Not Shared</div>
<svg class="a" style="left:1620px;top:315px" width="8" height="20" viewBox="0 0 8 20"><circle cx="4" cy="4" r="2.2" fill="#3d3d3d"/><circle cx="4" cy="10" r="2.2" fill="#3d3d3d"/><circle cx="4" cy="16" r="2.2" fill="#3d3d3d"/></svg>
<div class="a" style="left:0;top:350px;width:1646px;height:48px;background:#fff"></div>
<div class="a" style="left:0;top:398px;width:1646px;height:2px;background:#a9abae"></div>
<div class="a" style="left:21px;top:365px;width:18px;height:18px;border:2px solid #3d3d3d;border-radius:2px"></div>
<div class="t " style="left:58.40px;top:366.75px;font-size:15.65px;color:#3a3a3a;">Lab Order 00003</div>
<div class="t " style="left:241.00px;top:366.75px;font-size:15.65px;color:#3a3a3a;">Document</div>
<div class="t " style="left:607.20px;top:366.65px;font-size:16.6px;color:#3a3a3a;">12/11/2023 03:40 PM</div>
<div class="t " style="left:973.10px;top:366.75px;font-size:15.65px;color:#3a3a3a;">Lab</div>
<div class="t " style="left:1155.90px;top:366.92px;font-size:15.45px;color:#3a3a3a;">John Smith</div>
<div class="t " style="left:1338.90px;top:366.88px;font-size:15.5px;color:#3a3a3a;">Not Shared</div>
<svg class="a" style="left:1620px;top:365px" width="8" height="20" viewBox="0 0 8 20"><circle cx="4" cy="4" r="2.2" fill="#3d3d3d"/><circle cx="4" cy="10" r="2.2" fill="#3d3d3d"/><circle cx="4" cy="16" r="2.2" fill="#3d3d3d"/></svg>
<div class="a" style="left:0;top:400px;width:1646px;height:48px;background:#fff"></div>
<div class="a" style="left:0;top:448px;width:1646px;height:2px;background:#a9abae"></div>
<div class="a" style="left:21px;top:415px;width:18px;height:18px;border:2px solid #3d3d3d;border-radius:2px"></div>
<div class="t " style="left:58.40px;top:416.75px;font-size:15.65px;color:#3a3a3a;">Lab Order 00003</div>
<div class="t " style="left:241.00px;top:416.75px;font-size:15.65px;color:#3a3a3a;">Document</div>
<div class="t " style="left:607.20px;top:416.65px;font-size:16.6px;color:#3a3a3a;">12/11/2023 03:38 PM</div>
<div class="t " style="left:973.10px;top:416.75px;font-size:15.65px;color:#3a3a3a;">Lab</div>
<div class="t " style="left:1155.90px;top:416.92px;font-size:15.45px;color:#3a3a3a;">John Smith</div>
<div class="t " style="left:1338.90px;top:416.88px;font-size:15.5px;color:#3a3a3a;">Not Shared</div>
<svg class="a" style="left:1620px;top:415px" width="8" height="20" viewBox="0 0 8 20"><circle cx="4" cy="4" r="2.2" fill="#3d3d3d"/><circle cx="4" cy="10" r="2.2" fill="#3d3d3d"/><circle cx="4" cy="16" r="2.2" fill="#3d3d3d"/></svg>
</div>
<div class="a" style="left:1632px;top:545px;width:155px;height:142px;background:#fff;box-shadow:0 1px 4px rgba(0,0,0,0.35);z-index:20"></div>
<div class="a" style="left:1633px;top:602px;width:153px;height:28px;background:#2f72d6;z-index:21"></div>
<div class="t " style="left:1647.20px;top:553.13px;font-size:15.8px;color:#3d3d3d;z-index:22;">Download</div>
<div class="t " style="left:1647.20px;top:580.63px;font-size:15.8px;color:#3d3d3d;z-index:22;">Print</div>
<div class="t " style="left:1647.20px;top:609.48px;font-size:15.5px;color:#fff;z-index:22;-webkit-text-stroke:0.3px #fff">Share</div>
<div class="t " style="left:1647.20px;top:637.33px;font-size:15.2px;color:#3d3d3d;z-index:22;">Share to Sign</div>
<div class="t " style="left:1647.20px;top:664.53px;font-size:15.8px;color:#3d3d3d;z-index:22;">Delete</div>
<svg class="a" style="left:1705px;top:613px;z-index:30" width="20" height="26" viewBox="0 0 20 26">
<path d="M6.2 13.5 V3.2 Q6.2 1.4 7.8 1.4 Q9.4 1.4 9.4 3.2 V9.5 Q9.6 8 11 8 Q12.4 8 12.5 9.6 Q12.8 8.6 14 8.6 Q15.3 8.6 15.4 10.2 Q15.8 9.4 16.8 9.5 Q18.2 9.6 18.2 11.4 V17 Q18.2 23.6 12.5 23.6 Q9 23.6 7 20.5 L2.2 14.8 Q1.3 13.4 2.5 12.6 Q3.7 11.9 5 13.1Z" fill="#fff" stroke="#111" stroke-width="1.2" stroke-linejoin="round"/>
<path d="M9.4 9.5 V14.5 M12.5 9.6 V14.5 M15.4 10.2 V14.5" stroke="#111" stroke-width="1"/></svg>
<div class="a" style="left:884px;top:117px;width:138px;height:66px;border:4px solid #8b0a0a;z-index:40"></div>
<div class="a" style="left:997.8000000000001px;top:72.8px;width:29.6px;height:29.6px;border-radius:50%;background:#8b0a0a;z-index:41"></div>
<div class="t " style="left:712.60px;width:600px;text-align:center;top:79.51px;font-size:17px;color:#fff;z-index:42">1</div>
<div class="a" style="left:397.5px;top:529px;width:188.0px;height:53px;border:4px solid #8b0a0a;z-index:40"></div>
<div class="a" style="left:562.6px;top:489.5px;width:29.6px;height:29.6px;border-radius:50%;background:#8b0a0a;z-index:41"></div>
<div class="t " style="left:277.40px;width:600px;text-align:center;top:496.21px;font-size:17px;color:#fff;z-index:42">2</div>
<div class="a" style="left:1625px;top:593px;width:125px;height:49px;border:4px solid #8b0a0a;z-index:40"></div>
<div class="a" style="left:1723.5px;top:556.7px;width:29.6px;height:29.6px;border-radius:50%;background:#8b0a0a;z-index:41"></div>
<div class="t " style="left:1438.30px;width:600px;text-align:center;top:563.41px;font-size:17px;color:#fff;z-index:42">3</div></body></html>
